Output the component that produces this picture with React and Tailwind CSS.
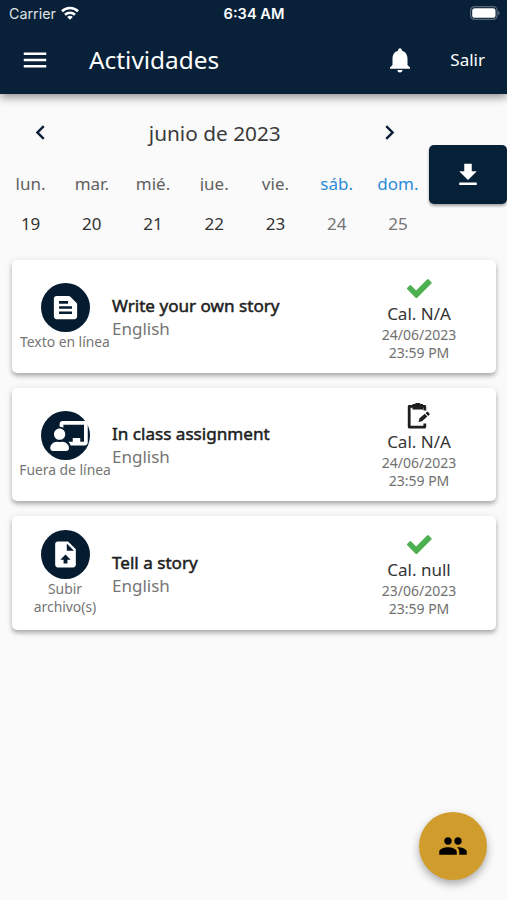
import { MdMenu, MdNotifications, MdChevronLeft, MdChevronRight, MdTextSnippet, MdPeople } from "react-icons/md";
import { FaChalkboardTeacher } from "react-icons/fa";

const days = [
  { label: "lun.", day: 19 },
  { label: "mar.", day: 20 },
  { label: "mié.", day: 21 },
  { label: "jue.", day: 22 },
  { label: "vie.", day: 23 },
  { label: "sáb.", day: 24, weekend: true },
  { label: "dom.", day: 25, weekend: true },
];

const activities = [
  { id: 1, title: "Write your own story", subject: "English", type: "Texto en línea", icon: TextIcon, status: DoneIcon, grade: "Cal. N/A", date: "24/06/2023", time: "23:59 PM" },
  { id: 2, title: "In class assignment", subject: "English", type: "Fuera de línea", icon: ClassIcon, status: PendingIcon, grade: "Cal. N/A", date: "24/06/2023", time: "23:59 PM" },
  { id: 3, title: "Tell a story", subject: "English", type: "Subir archivo(s)", icon: UploadIcon, status: DoneIcon, grade: "Cal. null", date: "23/06/2023", time: "23:59 PM" },
];

function TextIcon() {
  return <MdTextSnippet className="size-[31px]" />;
}

// Wider than the badge content, so it runs to the right edge of the circle
function ClassIcon() {
  return (
    <span className="flex w-[30px]">
      <FaChalkboardTeacher className="h-[30px] w-[38px] shrink-0" />
    </span>
  );
}

function UploadIcon() {
  return (
    <svg viewBox="0 0 24 24" fill="currentColor" className="size-[31px]">
      <path d="M14 2H6c-1.1 0-2 .9-2 2v16c0 1.1.9 2 2 2h12c1.1 0 2-.9 2-2V8l-6-6zm-.5 14v3h-3v-3H8l4-4 4 4h-2.5zM13 9V3.500L18.500 9H13z" />
    </svg>
  );
}

function DoneIcon() {
  return (
    <svg viewBox="0 0 1792 1792" fill="#4caf50" className="-mb-[2px] mr-px size-[30px]">
      <path d="M1671 566q0 28-20 48l-724 724-136 136q-20 20-48 20t-48-20l-136-136-362-362q-20-20-20-48t20-48l136-136q20-20 48-20t48 20l294 295 656-657q20-20 48-20t48 20l136 136q20 20 20 48z" />
    </svg>
  );
}

function PendingIcon() {
  return (
    <svg viewBox="0 0 26 26" className="mt-[2px] size-[26px] text-[#1f1f1f]" fill="currentColor">
      <path d="M6.500 1h2.500a2.800 2 0 0 1 5.400 0H17v5.500H6.500z" />
      <path d="M7 3.300H3.200v20.800h15.600v-3.500M16 3.300h2.800v4.200" fill="none" stroke="currentColor" strokeWidth="2.800" strokeLinejoin="round" />
      <path d="M12.500 19l1-3.700 5.300-4.600 2.500 2.900-5.300 4.600zM19.600 10l1.300-1.100c.4-.3.900-.3 1.200.1l1.400 1.600c.3.400.3.900-.1 1.200l-1.300 1.100z" />
    </svg>
  );
}

function StatusBar() {
  return (
    <div className="grid h-[27px] grid-cols-3 items-center pl-[9px] pr-[7px] font-['Inter','Liberation_Sans',sans-serif] text-[14px]">
      <div className="flex items-center gap-[5px]">
        <span className="text-[14.300px] text-[#dfe3e8]">Carrier</span>
        <svg viewBox="0 0 18 14" className="-mt-px h-[14px] w-[18px]" fill="none" stroke="currentColor" strokeWidth="2.600">
          <path d="M1 5.300a11.500 11.500 0 0 1 16 0" />
          <path d="M4 8.700a7.200 7.200 0 0 1 10 0" />
          <path d="M6.200 11a4 4 0 0 1 5.600 0L9 13.800z" fill="currentColor" stroke="none" />
        </svg>
      </div>
      <span className="-ml-px pt-[2px] text-center text-[14.600px] font-semibold whitespace-nowrap">6:34 AM</span>
      <svg viewBox="0 0 30 14" className="-mt-px h-[14px] w-[30px] justify-self-end">
        <rect x="0.600" y="0.600" width="26.500" height="12.800" rx="4" fill="none" stroke="#5a6a7b" strokeWidth="1.200" />
        <rect x="2.200" y="2.200" width="23.300" height="9.600" rx="2.600" fill="#fff" />
        <path d="M28.200 4.800c1.800.8 1.800 3.600 0 4.400z" fill="#6b7a8a" />
      </svg>
    </div>
  );
}

function Calendar() {
  return (
    <div className="flex items-start">
      <div className="w-[429px] shrink-0">
        <div className="flex h-[39px] items-center justify-between pr-[25px] pl-[25.500px] text-[#0a1f35]">
          <MdChevronLeft className="size-[29px]" />
          <h2 className="pt-[2px] text-[20.800px] text-[#3a3a3a]">junio de 2023</h2>
          <MdChevronRight className="size-[29px]" />
        </div>
        <div className="mt-[18px] grid w-[428.500px] grid-cols-7 text-center">
          {days.map((item) => (
            <div key={item.day} className="flex flex-col items-center">
              <span className={`text-[17px] leading-[28px] [clip-path:inset(0_0_7px_0)] ${item.weekend ? "text-[#2c8ad8]" : "text-[#616161]"}`}>
                {item.label}
              </span>
              <span className={`mt-[12px] text-[17px] leading-[28px] ${item.weekend ? "text-[#757575]" : "text-[#333333]"}`}>
                {item.day}
              </span>
            </div>
          ))}
        </div>
      </div>
      <button className="mt-[32px] flex h-[59px] w-[78px] items-center justify-center rounded-[5px] bg-[#062038] text-white shadow-[0_2px_3px_rgba(0,0,0,0.35)]">
        <svg viewBox="0 0 24 24" fill="currentColor" className="size-[30px]">
          <path d="M19 9h-4V3H9v6H5l7 7 7-7zM5 18v2h14v-2H5z" />
        </svg>
      </button>
    </div>
  );
}

function ActivityCard({ activity }) {
  return (
    <div className="flex h-[113.500px] items-center rounded-[5px] bg-white pl-[7px] shadow-[0_3px_4px_rgba(0,0,0,0.28),0_1px_8px_rgba(0,0,0,0.08)]">
      <div className="flex w-[92px] shrink-0 flex-col items-center pt-px">
        <div className="flex size-[49px] items-center justify-center rounded-full bg-[#041b30] text-white">
          <activity.icon />
        </div>
        <p className="pt-px text-center text-[13.900px] leading-[18px] tracking-[-0.02px] text-[#757575]">{activity.type}</p>
      </div>
      <div className="min-w-0 flex-1 pt-[1.500px] pl-[1px]">
        <p className="text-[17.100px] leading-[23px] text-[#212121] [-webkit-text-stroke:0.500px_#212121]">{activity.title}</p>
        <p className="text-[17px] leading-[23px] text-[#757575]">{activity.subject}</p>
      </div>
      <div className="flex w-[154px] shrink-0 flex-col items-center pt-[2px]">
        <activity.status />
        <p className="text-[17px] leading-[25px] text-[#333333]">{activity.grade}</p>
        <p className="text-[14px] leading-[18px] text-[#707070]">{activity.date}</p>
        <p className="text-[14px] leading-[18px] text-[#707070]">{activity.time}</p>
      </div>
    </div>
  );
}

export default function App() {
  return (
    <div className="relative h-[900px] w-[507px] overflow-hidden bg-[#fafafa] font-['Noto_Sans',sans-serif]">
      <header className="h-[94px] bg-[#082138] text-white shadow-[0_3px_9px_rgba(0,0,0,0.45)]">
        <StatusBar />
        <div className="flex h-[66px] items-center pl-[20px] pr-[22px]">
          <MdMenu className="size-[30px]" />
          <h1 className="ml-[39px] text-[24.400px]">Actividades</h1>
          <MdNotifications className="ml-auto size-[30px]" />
          <span className="ml-[35px] text-[17px]">Salir</span>
        </div>
      </header>

      <main className="pt-[19px]">
        <Calendar />
        <div className="mt-[21.500px] flex flex-col gap-[14.800px] pl-[12px] pr-[11px]">
          {activities.map((activity) => (
            <ActivityCard key={activity.id} activity={activity} />
          ))}
        </div>
      </main>

      <button className="absolute right-[20px] bottom-[20px] flex size-[68px] items-center justify-center rounded-full bg-[#d09c2b] text-black shadow-[0_4px_8px_rgba(0,0,0,0.32)]">
        <MdPeople className="size-[30px]" />
      </button>
    </div>
  );
}
